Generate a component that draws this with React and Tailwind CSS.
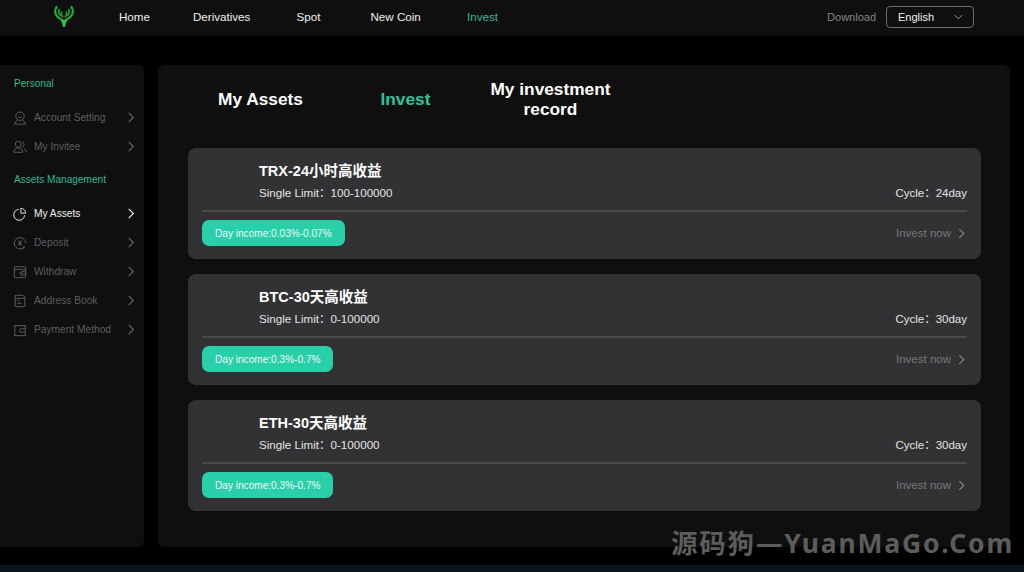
import React from "react";

const Chevron = ({ className = "w-[9px] h-[11px]", color = "#6b6b6b" }) => (
  <svg viewBox="0 0 9 12" className={className} fill="none" stroke={color} strokeWidth="1.2"><path d="M1.5 1l5 5-5 5" /></svg>
);

const Logo = () => (
  <svg viewBox="0 0 22 22" className="w-[22px] h-[22px]" fill="none" stroke="#21a83f" strokeLinecap="round">
    <path d="M3.500 1C1 5 1.500 10 8.500 13.500" strokeWidth="2.200" />
    <path d="M18.500 1C21 5 20.500 10 13.500 13.500" strokeWidth="2.200" />
    <path d="M6 3.500C5.500 6 6 8 8 9.500M16 3.500C16.500 6 16 8 14 9.500" strokeWidth="1.600" />
    <path d="M8.500 6C8.300 8 8.800 9.800 9.800 11M13.500 6C13.700 8 13.200 9.800 12.200 11" strokeWidth="1.300" />
    <path d="M7.500 13.500h7l-1.600 3.500-.9 4h-2l-.9-4z" fill="#2bc24c" stroke="none" />
  </svg>
);

const I = ({ children, color }) => (
  <svg viewBox="0 0 16 16" className="w-[14px] h-[14px] shrink-0" fill="none" stroke={color} strokeWidth="1.100">{children}</svg>
);

const icons = {
  account: <><circle cx="8" cy="6" r="4.800" /><path d="M5.500 6.500c.8 1.500 4.200 1.500 5 0" /><path d="M4.500 10.500L1.500 15h13l-3-4.500" /></>,
  invitee: <><circle cx="6" cy="5" r="3.500" /><path d="M1 14c0-3 2-5 5-5s5 2 5 5z" /><path d="M10.500 1.800a3.500 3.500 0 0 1 0 6.400M12.500 9.500c1.500.8 2.500 2.500 2.500 4.500" /></>,
  assets: <><path d="M6.500 2.800a6.200 6.200 0 1 0 6.700 6.700" /><path d="M9 1.500a5.500 5.500 0 0 1 5.500 5.500H9z" /></>,
  deposit: <><path d="M13 12.500A6.500 6.500 0 1 1 14.500 8" /><path d="M6 5l2 2.500L10 5M8 7.500V11M6 8h4M6 9.500h4M12 14.500l1-2-2-.5" /></>,
  withdraw: <><rect x="1.500" y="2" width="13" height="12.500" rx="1" /><path d="M1.500 5h13" /><rect x="8" y="7.500" width="6.500" height="4" rx="2" /><circle cx="10.500" cy="9.500" r=".7" /></>,
  address: <><path d="M2.500 1.500h9l2 2v11h-11z" /><path d="M2.500 5h11M5 10.500h5M5 7.500h2.500" /></>,
  payment: <><rect x="2" y="3" width="12" height="11.500" /><path d="M14 6.500H9.500a2 2 0 0 0 0 4H14" /></>,
};

function NavItem({ icon, label, active }) {
  const c = active ? "#e8e8e8" : "#5f5f5f";
  return (
    <div className="h-[29px] flex items-center pl-[13px] pr-[8px]">
      <I color={c}>{icons[icon]}</I>
      <span className={`ml-[7px] flex-1 text-[10.200px] ${active ? "text-[#f0f0f0]" : "text-[#5e5e5e]"}`}>{label}</span>
      <Chevron color={active ? "#f0f0f0" : "#6a6a6a"} />
    </div>
  );
}

function Card({ title, limit, cycle, income }) {
  return (
    <div className="h-[111px] rounded-[8px] bg-[#323234] px-[14px] flex flex-col">
      <div className="h-[64px] flex justify-between border-b-2 border-b-[#4a4a4c] pl-[57px]">
        <div className="pt-[13px]">
          <div className="text-[14.500px] leading-[20px] font-bold text-white">{title}</div>
          <div className="text-[11.600px] leading-[16px] mt-[4px] text-[#e4e4e4]">Single Limit：{limit}</div>
        </div>
        <div className="text-[11.500px] leading-[16px] text-[#e4e4e4] pt-[37px]">Cycle：{cycle}</div>
      </div>
      <div className="flex-1 flex justify-between items-start pt-[8px]">
        <div className="h-[26px] px-[13px] pt-[1px] flex items-center rounded-[7px] bg-[#29cfa9] text-[10.100px] text-[#eef8f5]">Day income:{income}</div>
        <div className="h-[26px] pt-[1px] flex items-center text-[11.500px] text-[#777779]">
          Invest now
          <span className="ml-[7px] mr-[1px]"><Chevron className="w-[8px] h-[11px]" color="#8a8a8c" /></span>
        </div>
      </div>
    </div>
  );
}

export default function App() {
  return (
    <div className="relative w-[1024px] h-[572px] overflow-hidden bg-black font-['Liberation_Sans','Noto_Sans_CJK_SC',sans-serif]">
      <header className="h-[36px] bg-[#0f0f10] flex items-center pb-[2px]">
        <div className="w-[53px]" />
        <Logo />
        <nav className="flex items-center text-[11.600px] text-[#efefef] ml-[44px]">
          <span className="w-[74px]">Home</span>
          <span className="w-[103.500px]">Derivatives</span>
          <span className="w-[74px]">Spot</span>
          <span className="w-[96.500px]">New Coin</span>
          <span className="text-[#36b893]">Invest</span>
        </nav>
        <div className="flex-1" />
        <span className="text-[11px] text-[#858585]">Download</span>
        <div className="ml-[10px] mr-[50px] w-[88px] h-[22px] rounded-[4px] border border-[#6b6b6b] flex items-center justify-between pl-[11px] pr-[10px] text-[11px] text-[#efefef]">
          English
          <svg viewBox="0 0 10 6" className="w-[9px] h-[6px]" fill="none" stroke="#a0a0a0" strokeWidth="1.100"><path d="M1 1l4 4 4-4" /></svg>
        </div>
      </header>

      <div className="flex mt-[29px] h-[482px]">
        <aside className="w-[144px] rounded-r-[6px] bg-[#0f0f10]">
          <div className="h-[37px] flex items-center pl-[14px] text-[10.100px] text-[#36b893]">Personal</div>
          <div className="mt-[1px]">
            <NavItem icon="account" label="Account Setting" />
            <NavItem icon="invitee" label="My Invitee" />
          </div>
          <div className="h-[37px] flex items-center pl-[14px] text-[10.100px] text-[#36b893]">Assets Management</div>
          <div className="mt-[1px]">
            <NavItem icon="assets" label="My Assets" active />
            <NavItem icon="deposit" label="Deposit" />
            <NavItem icon="withdraw" label="Withdraw" />
            <NavItem icon="address" label="Address Book" />
            <NavItem icon="payment" label="Payment Method" />
          </div>
        </aside>

        <main className="ml-[14px] w-[852px] rounded-[6px] bg-[#0f0f10] pl-[30px] pr-[29px]">
          <div className="h-[68px] mb-[15px] flex items-center font-bold text-[17.300px] leading-[20px] text-white text-center">
            <div className="w-[145px]">My Assets</div>
            <div className="w-[145px] text-[#2ec39f]">Invest</div>
            <div className="w-[145px]">My investment record</div>
          </div>
          <div className="flex flex-col gap-[15px]">
            <Card title="TRX-24小时高收益" limit="100-100000" cycle="24day" income="0.03%-0.07%" />
            <Card title="BTC-30天高收益" limit="0-100000" cycle="30day" income="0.3%-0.7%" />
            <Card title="ETH-30天高收益" limit="0-100000" cycle="30day" income="0.3%-0.7%" />
          </div>
        </main>
      </div>

      <div className="absolute left-0 right-0 bottom-0 h-[7px] bg-[#0b1420]" />
      <div className="absolute left-[671px] top-[526px] text-[26.500px] leading-[34px] font-bold tracking-[1.800px] text-[#5c5c5c] whitespace-nowrap font-['Noto_Sans','Noto_Sans_CJK_SC',sans-serif]">源码狗—YuanMaGo.Com</div>
    </div>
  );
}
